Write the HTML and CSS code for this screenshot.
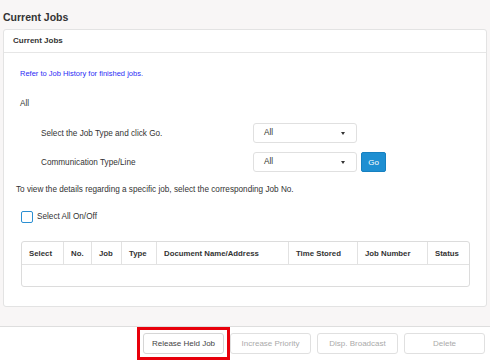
FILE: index.html
```html
<!DOCTYPE html>
<html lang="en">
<head>
    <meta charset="UTF-8">
    <title>Current Jobs</title>
    <link rel="stylesheet" href="styles.css">
</head>
<body>

    <h1 class="page-title">Current Jobs</h1>

    <div class="panel">
        <div class="panel-head">Current Jobs</div>
        <div class="panel-body">
            <a href="#" class="history-link">Refer to Job History for finished jobs.</a>
            <p class="filter-name">All</p>

            <div class="filter-row first">
                <span class="filter-label">Select the Job Type and click Go.</span>
                <div class="select-box">All<span class="caret"></span></div>
            </div>
            <div class="filter-row">
                <span class="filter-label">Communication Type/Line</span>
                <div class="select-box">All<span class="caret"></span></div>
                <button class="go-button">Go</button>
            </div>

            <p class="hint">To view the details regarding a specific job, select the corresponding Job No.</p>

            <label class="check-all"><span class="check-box"></span>Select All On/Off</label>

            <table class="job-table">
                <colgroup>
                    <col style="width: 42px">
                    <col style="width: 28px">
                    <col style="width: 30px">
                    <col style="width: 35px">
                    <col style="width: 132px">
                    <col style="width: 69px">
                    <col style="width: 70px">
                    <col>
                </colgroup>
                <tr>
                    <th>Select</th>
                    <th>No.</th>
                    <th>Job</th>
                    <th>Type</th>
                    <th>Document Name/Address</th>
                    <th>Time Stored</th>
                    <th>Job Number</th>
                    <th>Status</th>
                </tr>
                <tr>
                    <td></td><td></td><td></td><td></td><td></td><td></td><td></td><td></td>
                </tr>
            </table>
        </div>
    </div>

    <div class="footer">
        <button class="action-button active">Release Held Job</button>
        <button class="action-button" disabled>Increase Priority</button>
        <button class="action-button" disabled>Disp. Broadcast</button>
        <button class="action-button" disabled>Delete</button>
    </div>

</body>
</html>
```

FILE: styles.css
```css
body {
    font-family: "Liberation Sans", Arial, sans-serif;
    background-color: #f8f6f6;
    color: #333;
    margin: 0;
    padding: 0;
    font-size: 8.2px;
}
.page-title {
    font-size: 10.5px;
    font-weight: bold;
    line-height: 12px;
    margin: 0;
    padding: 11px 3px 6px;
}
.panel {
    margin: 0 3px;
    background-color: #fff;
    border: 1px solid #e3e3e3;
    border-radius: 3px;
}
.panel-head {
    height: 22px;
    line-height: 22px;
    padding-left: 9px;
    font-weight: bold;
    font-size: 8px;
    border-bottom: 1px solid #e6e6e6;
}
.panel-body {
    padding: 15px 17px 19px 12px;
    display: flex;
    flex-direction: column;
    align-items: flex-start;
}
.history-link {
    color: #2c2cf5;
    text-decoration: none;
    font-size: 7.5px;
    line-height: 12px;
    margin-left: 4px;
}
.filter-name {
    margin: 18px 0 0 4px;
    line-height: 12px;
}
.filter-row {
    display: flex;
    align-items: center;
    margin-top: 9px;
    height: 20px;
}
.filter-row.first {
    margin-top: 13px;
}
.filter-label {
    width: 212px;
    padding-left: 25px;
}
.select-box {
    position: relative;
    width: 92px;
    height: 18px;
    line-height: 18px;
    padding-left: 10px;
    border: 1px solid #e0e0e0;
    border-radius: 3px;
    background-color: #fff;
}
.caret {
    position: absolute;
    right: 11px;
    top: 8px;
    border-left: 2.5px solid transparent;
    border-right: 2.5px solid transparent;
    border-top: 3px solid #333;
}
.go-button {
    margin-left: 4px;
    width: 25px;
    height: 20px;
    padding: 0;
    border: 1px solid #1680c0;
    border-radius: 2px;
    background-color: #1e8fd2;
    color: #fff;
    font-family: inherit;
    font-size: 8px;
}
.hint {
    margin: 12px 0 0;
    line-height: 12px;
}
.check-all {
    display: flex;
    align-items: center;
    margin: 14px 0 0 5px;
    height: 13px;
}
.check-box {
    width: 10px;
    height: 10px;
    border: 1.5px solid #2b8fd2;
    border-radius: 2px;
    margin-right: 4px;
}
.job-table {
    margin: 18px 0 0 5px;
    width: 449px;
    border: 1px solid #dcdcdc;
    border-radius: 3px;
    border-spacing: 0;
    table-layout: fixed;
}
.job-table th {
    height: 22px;
    padding: 0 0 0 7px;
    text-align: left;
    font-size: 7.8px;
    font-weight: bold;
    border-right: 1px solid #e2e2e2;
    border-bottom: 1px solid #e2e2e2;
    white-space: nowrap;
    overflow: hidden;
}
.job-table td {
    height: 21px;
    padding: 0;
}
.job-table th:last-child {
    border-right: none;
}
.footer {
    margin-top: 19px;
    border-top: 1px solid #dedede;
    background-color: #fff;
    height: 40px;
    display: flex;
    gap: 6px;
    padding: 6px 0 0 143px;
}
.action-button {
    position: relative;
    width: 81px;
    height: 21px;
    padding: 0;
    font-family: inherit;
    font-size: 8px;
    color: #aaa;
    background-color: #fff;
    border: 1px solid #e0e0e0;
    border-radius: 3px;
}
.action-button.active {
    color: #444;
    border-color: #d6d6d6;
}
/* red highlight frame around the selected button */
.action-button.active::after {
    content: "";
    position: absolute;
    top: -7px;
    bottom: -7px;
    left: -7px;
    right: -7px;
    border: 3px solid #e8000b;
}
```
